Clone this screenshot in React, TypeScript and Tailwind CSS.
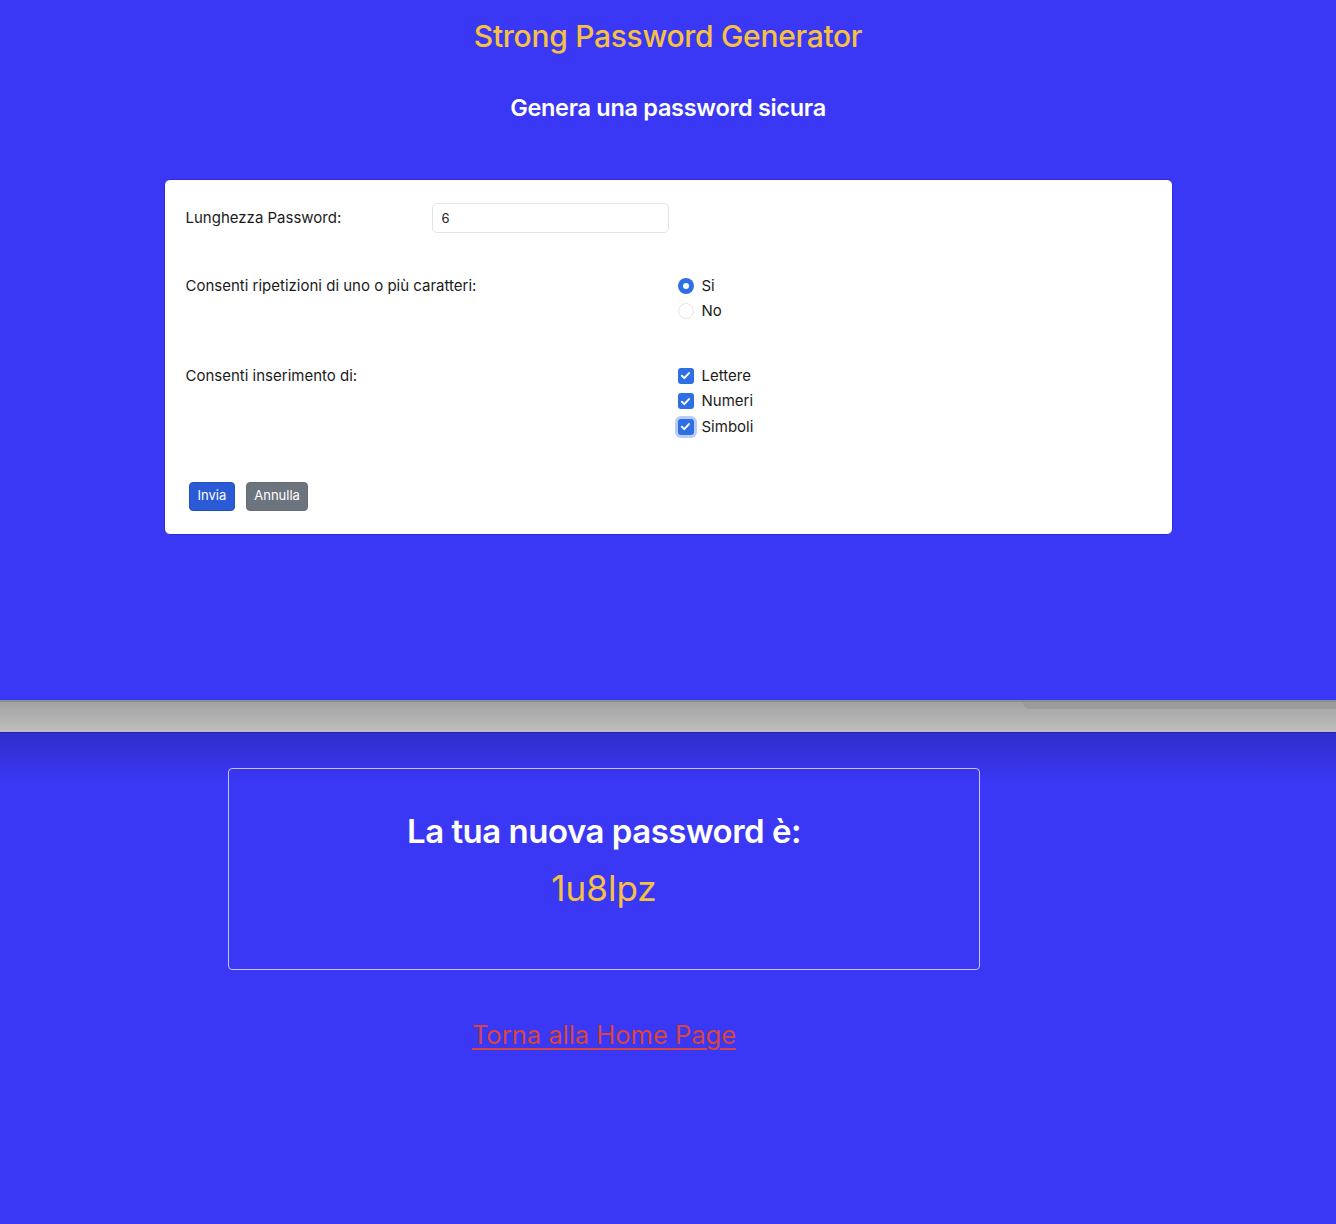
import { useState } from "react";

function CheckIcon() {
  return (
    <svg viewBox="0 0 16 16" className="h-[13px] w-[13px]" fill="none">
      <path
        d="M3.5 8.3l3 3 5.8-6.3"
        stroke="white"
        strokeWidth="2.4"
        strokeLinecap="round"
        strokeLinejoin="round"
      />
    </svg>
  );
}

function Radio({ checked, label }: { checked: boolean; label: string }) {
  return (
    <div className="flex h-[25.5px] items-center">
      {checked ? (
        <span className="flex h-4 w-4 items-center justify-center rounded-full bg-[#2f6fe6]">
          <span className="h-[6px] w-[6px] rounded-full bg-white" />
        </span>
      ) : (
        <span className="h-4 w-4 rounded-full border border-[#e6e6e6] bg-white" />
      )}
      <span className="ml-[8px]">{label}</span>
    </div>
  );
}

function Check({ label, focus }: { label: string; focus?: boolean }) {
  return (
    <div className="flex h-[25.5px] items-center">
      <span
        className={
          "flex h-4 w-4 items-center justify-center rounded-[3px] bg-[#2f6fe6]" +
          (focus ? " ring-[3px] ring-[#b9cdf8]" : "")
        }
      >
        <CheckIcon />
      </span>
      <span className="ml-[8px]">{label}</span>
    </div>
  );
}

export default function App() {
  const [length, setLength] = useState("6");

  return (
    <div className="min-h-[1224px] bg-[#3a38f5] font-['Inter','Liberation_Sans',sans-serif]">
      {/* prima pagina: form */}
      <section className="flex h-[700px] flex-col items-center">
        <h1 className="mt-[17px] text-[30px] font-medium leading-[38px] tracking-[-0.3px] text-[#f6c142]">
          Strong Password Generator
        </h1>
        <h2 className="mt-[38px] text-[23.5px] font-semibold leading-[30px] tracking-[-0.3px] text-white">
          Genera una password sicura
        </h2>

        <form
          onSubmit={(e) => e.preventDefault()}
          className="mt-[56px] w-[1009px] rounded-[6px] border border-[#2d2bd8] bg-white pb-[23px] pl-[21px] pr-5 pt-[23px] text-[15px] text-[#1b1b1b]"
        >
          <div className="flex h-[30px] items-center">
            <label htmlFor="len" className="w-[246px]">
              Lunghezza Password:
            </label>
            <input
              id="len"
              value={length}
              onChange={(e) => setLength(e.target.value)}
              className="h-[30px] w-[237px] rounded-[5px] border border-[#e4e4e4] px-[9px] text-[13px] text-[#222] outline-none"
            />
          </div>

          <div className="mt-[40px] flex">
            <span className="w-[492px] leading-[25.5px]">
              Consenti ripetizioni di uno o più caratteri:
            </span>
            <div>
              <Radio checked label="Si" />
              <Radio checked={false} label="No" />
            </div>
          </div>

          <div className="mt-[39px] flex">
            <span className="w-[492px] leading-[25.5px]">Consenti inserimento di:</span>
            <div>
              <Check label="Lettere" />
              <Check label="Numeri" />
              <Check label="Simboli" focus />
            </div>
          </div>

          <div className="mt-[42px] flex gap-[11px] pl-[3px]">
            <button
              type="submit"
              className="h-[29px] rounded-[4px] border border-[#2350c0] bg-[#2a5ad6] px-[8px] text-[13px] text-white"
            >
              Invia
            </button>
            <button
              type="button"
              className="h-[29px] rounded-[4px] border border-[#656d75] bg-[#6c757d] px-[7px] text-[13px] text-white"
            >
              Annulla
            </button>
          </div>
        </form>
      </section>

      {/* barra del browser tra le due schermate */}
      <div className="relative h-[32px] border-t-2 border-[#8d8d8d] bg-gradient-to-b from-[#a3a3a3] to-[#bebebe]">
        <div className="absolute right-0 top-0 h-[7px] w-[313px] rounded-bl-[6px] bg-[#9b9b9b]" />
      </div>

      {/* seconda pagina: risultato */}
      <section className="h-[492px] border-t border-[#2220a8] bg-gradient-to-b from-[#302dcc] to-[#3a38f5] to-[10%]">
        <div className="ml-[228px] w-[752px] pt-[35px]">
          <div className="flex h-[202px] flex-col items-center rounded-[4px] border border-[#c4c4ff] pt-[42px]">
            <h3 className="text-[33px] font-semibold leading-[40px] tracking-[-0.5px] text-white">
              La tua nuova password è:
            </h3>
            <p className="mt-[16px] text-[35px] leading-[42px] text-[#f6c142]">1u8lpz</p>
          </div>
          <div className="mt-[47px] text-center">
            <a href="#" className="text-[25.5px] leading-[36px] text-[#d9443c] underline underline-offset-[4px]">
              Torna alla Home Page
            </a>
          </div>
        </div>
      </section>
    </div>
  );
}
